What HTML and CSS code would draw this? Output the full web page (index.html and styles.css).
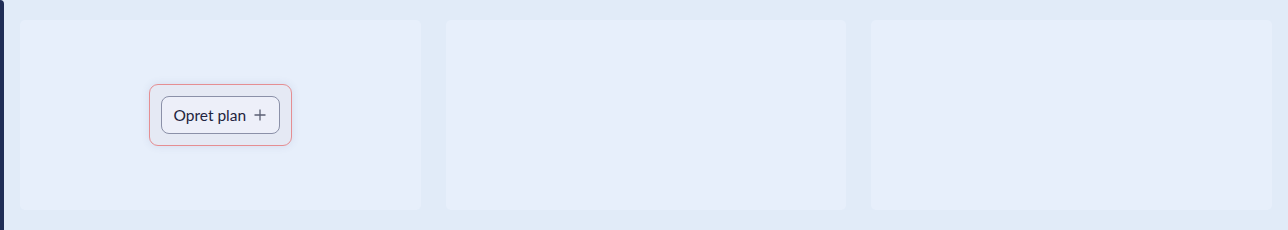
FILE: index.html
```html
<!DOCTYPE html>
<html lang="da">
<head>
<meta charset="utf-8">
<link rel="stylesheet" href="styles.css">
</head>
<body>
<div class="app">
  <div class="rail"></div>
  <main class="board">
    <section class="col">
      <div class="drop">
        <button class="btn">Opret plan
          <svg width="12" height="12" viewBox="0 0 12 12"><path d="M6 0.5V11.5M0.5 6H11.5" stroke="#5a5f73" stroke-width="1.3" fill="none"/></svg>
        </button>
      </div>
    </section>
    <section class="col"></section>
    <section class="col"></section>
  </main>
</div>
</body>
</html>
```
FILE: styles.css
```css
html, body { margin: 0; padding: 0; }
body {
  width: 1288px; height: 230px; overflow: hidden;
  background: #e1ebf8;
  font-family: Lato, "Noto Sans", sans-serif;
}
.app { display: flex; height: 230px; }
.rail {
  width: 4px; flex: none;
  background: #1f2d56;
  border-top-right-radius: 4px;
}
.board {
  flex: 1;
  display: grid;
  grid-template-columns: repeat(3, 1fr);
  gap: 25px;
  padding: 20px 16px 20px 16px;
}
.col {
  background: #e7effb;
  border-radius: 5px;
  display: flex; align-items: center; justify-content: center;
}
.drop {
  padding: 11px;
  border: 1px solid #e58e92;
  border-radius: 9px;
  background: #e5e9f4;
  box-shadow: 0 0 8px rgba(70, 80, 130, 0.12);
}
.btn {
  display: flex; align-items: center; gap: 8px;
  height: 38px; padding: 0 13px 0 12px;
  border: 1px solid #8b90a8;
  border-radius: 8px;
  background: #edeff9;
  color: #1f2440;
  font-family: Lato, "Noto Sans", sans-serif;
  font-size: 15.5px;
}
.btn svg { display: block; }
```
